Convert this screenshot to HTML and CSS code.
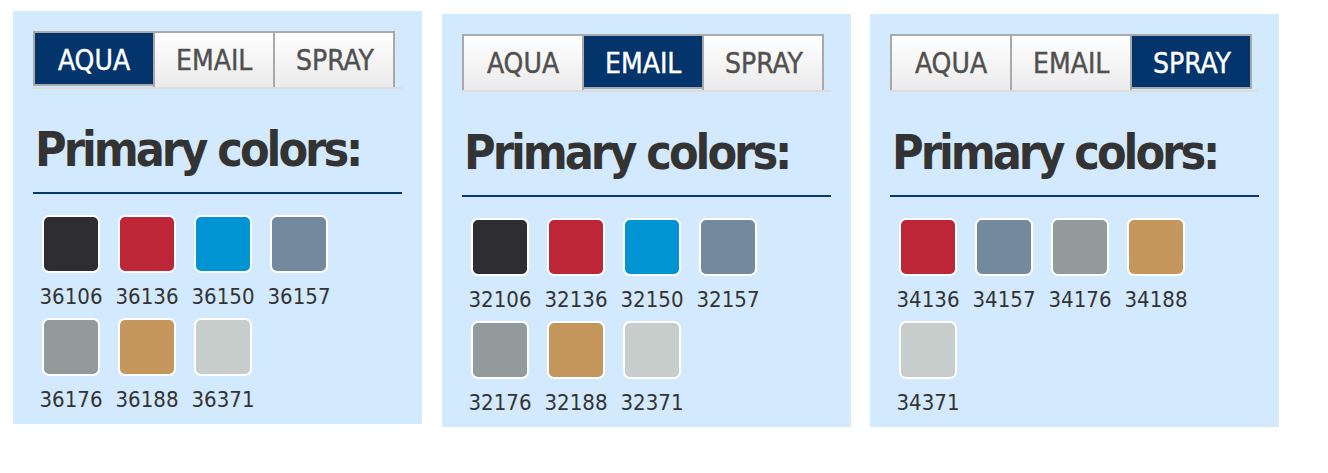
FILE: index.html
```html
<!DOCTYPE html>
<html>
<head>
<meta charset="utf-8">
<link rel="stylesheet" href="styles.css">
</head>
<body>
<div class="row">
  <section class="panel">
    <div class="tabs">
      <div class="tab tab--active">AQUA</div>
      <div class="tab">EMAIL</div>
      <div class="tab">SPRAY</div>
    </div>
    <h2 class="title">Primary colors:</h2>
    <div class="swatches">
      <div class="item"><div class="chip c-black"></div><div class="code">36106</div></div>
      <div class="item"><div class="chip c-red"></div><div class="code">36136</div></div>
      <div class="item"><div class="chip c-blue"></div><div class="code">36150</div></div>
      <div class="item"><div class="chip c-slate"></div><div class="code">36157</div></div>
      <div class="item"><div class="chip c-grey"></div><div class="code">36176</div></div>
      <div class="item"><div class="chip c-gold"></div><div class="code">36188</div></div>
      <div class="item"><div class="chip c-light"></div><div class="code">36371</div></div>
    </div>
  </section>
  <section class="panel panel--low">
    <div class="tabs">
      <div class="tab">AQUA</div>
      <div class="tab tab--active">EMAIL</div>
      <div class="tab">SPRAY</div>
    </div>
    <h2 class="title">Primary colors:</h2>
    <div class="swatches">
      <div class="item"><div class="chip c-black"></div><div class="code">32106</div></div>
      <div class="item"><div class="chip c-red"></div><div class="code">32136</div></div>
      <div class="item"><div class="chip c-blue"></div><div class="code">32150</div></div>
      <div class="item"><div class="chip c-slate"></div><div class="code">32157</div></div>
      <div class="item"><div class="chip c-grey"></div><div class="code">32176</div></div>
      <div class="item"><div class="chip c-gold"></div><div class="code">32188</div></div>
      <div class="item"><div class="chip c-light"></div><div class="code">32371</div></div>
    </div>
  </section>
  <section class="panel panel--low panel--last">
    <div class="tabs">
      <div class="tab">AQUA</div>
      <div class="tab">EMAIL</div>
      <div class="tab tab--active">SPRAY</div>
    </div>
    <h2 class="title">Primary colors:</h2>
    <div class="swatches">
      <div class="item"><div class="chip c-red"></div><div class="code">34136</div></div>
      <div class="item"><div class="chip c-slate"></div><div class="code">34157</div></div>
      <div class="item"><div class="chip c-grey"></div><div class="code">34176</div></div>
      <div class="item"><div class="chip c-gold"></div><div class="code">34188</div></div>
      <div class="item"><div class="chip c-light"></div><div class="code">34371</div></div>
    </div>
  </section>
</div>
</body>
</html>
```
FILE: styles.css
```css
html, body {
  margin: 0;
  padding: 0;
  background: #ffffff;
}
body {
  font-family: "DejaVu Sans Condensed", "DejaVu Sans", sans-serif;
  font-stretch: condensed;
  color: #333333;
}
.row {
  display: flex;
  align-items: flex-start;
  gap: 20px;
  padding: 11px 0 0 13px;
}
.panel {
  width: 409px;
  box-sizing: border-box;
  background: #d3e9fd;
  padding: 20px 20px 11px 20px;
}
.panel--low {
  margin-top: 3px;
}
.panel--last {
  margin-left: -1px;
}
.tabs {
  display: flex;
  align-items: flex-start;
  border-bottom: 2px solid #dcdcdc;
}
.tab {
  width: 122px;
  box-sizing: border-box;
  border: 2px solid #a9a9a9;
  border-bottom: 0;
  padding: 12px 21px 11px 21px;
  line-height: 31px;
  font-size: 28px;
  text-align: center;
  white-space: nowrap;
  color: #505050;
  -webkit-text-stroke: 0.4px currentColor;
  background: linear-gradient(#ffffff, #ebebeb);
}
.tab + .tab {
  margin-left: -2px;
}
.tab--active {
  position: relative;
  z-index: 1;
  border-bottom: 2px solid #a9a9a9;
  padding-bottom: 8px;
  background: #03346b;
  color: #ffffff;
}
.title {
  margin: 32px 0 0 0;
  padding: 0 0 15px 2px;
  border-bottom: 2px solid #06386b;
  font-size: 48px;
  line-height: 56px;
  font-weight: bold;
  letter-spacing: -3px;
  color: #333333;
}
.swatches {
  display: grid;
  grid-template-columns: repeat(4, 76px);
  row-gap: 8px;
  margin-top: 21px;
}
.item {
  display: flex;
  flex-direction: column;
  align-items: center;
}
.chip {
  width: 58px;
  height: 58px;
  box-sizing: border-box;
  border: 2px solid #ffffff;
  border-radius: 7px;
  margin-bottom: 11px;
}
.code {
  font-size: 22px;
  line-height: 26px;
  color: #333333;
}
.c-black { background: #2e2d32; }
.c-red { background: #bd2636; }
.c-blue { background: #0094d2; }
.c-slate { background: #738a9e; }
.c-grey { background: #929a9c; }
.c-gold { background: #c6975c; }
.c-light { background: #c7cdca; }
```
